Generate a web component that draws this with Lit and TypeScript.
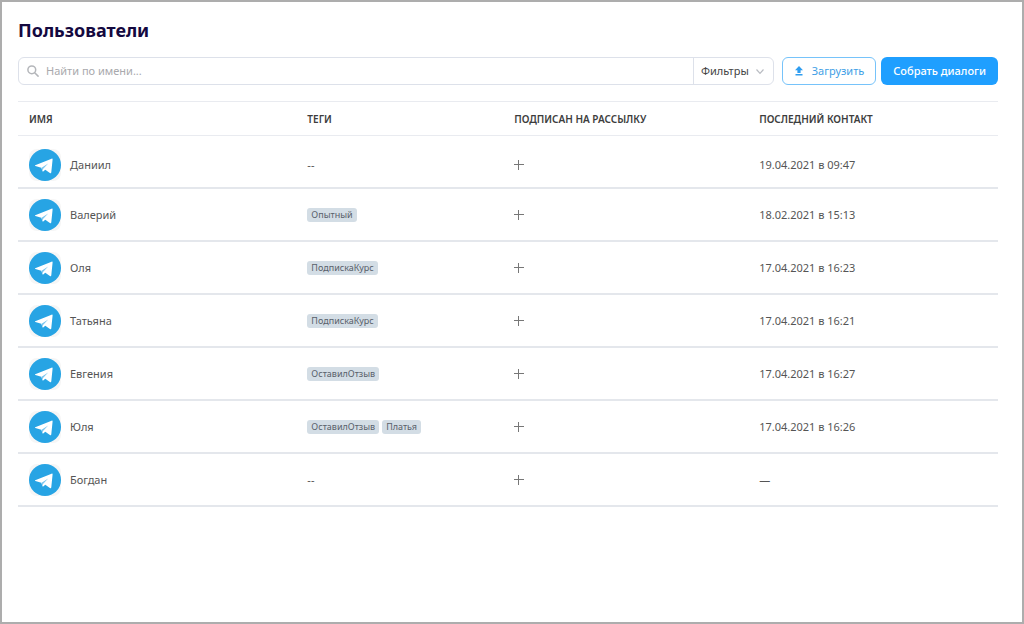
import { LitElement, html, css, svg } from "lit";
import { customElement, state } from "lit/decorators.js";

interface User {
  name: string;
  tags: string[];
  lastContact: string;
}

const USERS: User[] = [
  { name: "Даниил", tags: [], lastContact: "19.04.2021 в 09:47" },
  { name: "Валерий", tags: ["Опытный"], lastContact: "18.02.2021 в 15:13" },
  { name: "Оля", tags: ["ПодпискаКурс"], lastContact: "17.04.2021 в 16:23" },
  { name: "Татьяна", tags: ["ПодпискаКурс"], lastContact: "17.04.2021 в 16:21" },
  { name: "Евгения", tags: ["ОставилОтзыв"], lastContact: "17.04.2021 в 16:27" },
  { name: "Юля", tags: ["ОставилОтзыв", "Платья"], lastContact: "17.04.2021 в 16:26" },
  { name: "Богдан", tags: [], lastContact: "—" },
];

const plane = svg`
  <circle cx="16" cy="16" r="16" fill="#27a4e4"></circle>
  <path d="M6.200 16.300 22.600 9.700c.7-.3 1.100 0 1 .8l-1.300 12.700c-.1.900-.7 1.200-1.400.8l-4.600-3.300-1.800 1.600c-.5.400-.9.300-1.100-.3l-1.100-3.300-5.900-1.600c-.7-.2-.8-.6-.2-.8z" fill="#fff"></path>
  <path d="m12.600 18.800 6.600-4.300-5.200 5.400-.3 2.300z" fill="#7cc6ee"></path>`;

@customElement("app-root")
export class AppRoot extends LitElement {
  static styles = css`
    :host {
      display: block;
      box-sizing: border-box;
      min-height: 100vh;
      padding: 16px 24px 24px 16px;
      border: 2px solid #adadad;
      background: #fff;
      color: #555;
      font: 11px/16px "Noto Sans", "Open Sans", sans-serif;
    }
    .title {
      margin: 0;
      color: #14093f;
      font-size: 18px;
      font-weight: 700;
      line-height: 24px;
    }
    .toolbar {
      display: flex;
      gap: 5px;
      margin: 15px 0 16px;
      height: 28px;
    }
    .search {
      display: flex;
      flex: 1;
      box-sizing: border-box;
      margin-right: 3px;
      border: 1px solid #dde1ea;
      border-radius: 6px;
    }
    .field {
      display: flex;
      flex: 1;
      align-items: center;
      gap: 7px;
      padding-left: 8px;
    }
    .input {
      flex: 1;
      min-width: 0;
      padding: 0;
      border: 0;
      outline: 0;
      background: none;
      color: #444;
      font: inherit;
    }
    .input::placeholder {
      color: #a9a9ad;
      opacity: 1;
    }
    button {
      display: flex;
      align-items: center;
      justify-content: center;
      box-sizing: border-box;
      border: 0;
      background: none;
      font: inherit;
      white-space: nowrap;
      cursor: pointer;
    }
    .filters {
      gap: 6px;
      padding: 0 8px 0 7px;
      border-left: 1px solid #dde1ea;
      color: #444;
    }
    .upload {
      gap: 8px;
      padding: 0 11px;
      border: 1px solid #76c3fa;
      border-radius: 6px;
      color: #3f9fe6;
    }
    .collect {
      padding: 0 12px;
      border-radius: 6px;
      background: #1f9fff;
      color: #fff;
      font-weight: 500;
    }
    .users {
      width: 100%;
      border-collapse: separate;
      border-spacing: 0;
      table-layout: fixed;
    }
    .col-name {
      width: 28.2%;
    }
    .col-tags {
      width: 21.1%;
    }
    .col-subscribed {
      width: 25%;
    }
    th,
    td {
      box-sizing: border-box;
      padding: 0 12px 0 13px;
      text-align: left;
      vertical-align: middle;
    }
    th {
      height: 35px;
      border-top: 1px solid #e9ebf0;
      border-bottom: 1px solid #e9ebf0;
      color: #3d3d3d;
      font-size: 10px;
      font-weight: 600;
      text-transform: uppercase;
    }
    td {
      height: 53px;
      border-bottom: 2px solid #e4e7ec;
    }
    tbody tr:first-child td {
      padding-top: 6px;
    }
    th:first-child,
    td:first-child {
      padding-left: 11px;
    }
    .person {
      display: flex;
      align-items: center;
      gap: 9px;
    }
    .avatar {
      width: 32px;
      height: 32px;
      background: #f6f6f6;
      border-radius: 8px;
    }
    .tags {
      display: flex;
      gap: 3px;
    }
    .tag {
      padding: 0 4px;
      border-radius: 3px;
      background: #d3dde5;
      color: #58606a;
      font-size: 9px;
      line-height: 14px;
    }
    svg {
      display: block;
      flex: none;
    }
  `;

  @state() private query = "";

  private onInput(event: Event) {
    this.query = (event.target as HTMLInputElement).value;
  }

  render() {
    const needle = this.query.trim().toLowerCase();
    const users = USERS.filter((u) => u.name.toLowerCase().includes(needle));
    return html`
      <h1 class="title">Пользователи</h1>
      <div class="toolbar">
        <div class="search">
          <label class="field">
            <svg width="12" height="12" viewBox="0 0 12 12" fill="none" stroke="#b4b6ba" stroke-width="1.500" stroke-linecap="round">
              <circle cx="4.800" cy="4.800" r="3.900"></circle>
              <path d="m7.700 7.700 3.400 3.400"></path>
            </svg>
            <input class="input" type="text" aria-label="Найти по имени" placeholder="Найти по имени..." .value=${this.query} @input=${this.onInput} />
          </label>
          <button class="filters" type="button">
            Фильтры
            <svg width="10" height="10" viewBox="0 0 10 10" fill="none" stroke="#b9bcc2" stroke-width="1.200">
              <path d="M1.500 3.500 5 7.300l3.500-3.800"></path>
            </svg>
          </button>
        </div>
        <button class="upload" type="button">
          <svg width="10" height="10" viewBox="0 0 10 10" fill="#2f9df0">
            <path d="M5 0 9 4.200H6.600V7H3.400V4.200H1zM1.500 8h7v1.500h-7z"></path>
          </svg>
          Загрузить
        </button>
        <button class="collect" type="button">Собрать диалоги</button>
      </div>
      <table class="users">
        <colgroup>
          <col class="col-name" />
          <col class="col-tags" />
          <col class="col-subscribed" />
          <col />
        </colgroup>
        <thead>
          <tr>
            <th scope="col">Имя</th>
            <th scope="col">Теги</th>
            <th scope="col">Подписан на рассылку</th>
            <th scope="col">Последний контакт</th>
          </tr>
        </thead>
        <tbody>
          ${users.map(
            (user) => html`
              <tr>
                <td>
                  <div class="person">
                    <svg class="avatar" viewBox="0 0 32 32" aria-hidden="true">${plane}</svg>
                    ${user.name}
                  </div>
                </td>
                <td>
                  ${user.tags.length
                    ? html`<div class="tags">${user.tags.map((tag) => html`<span class="tag">${tag}</span>`)}</div>`
                    : "--"}
                </td>
                <td>
                  <svg width="10" height="10" viewBox="0 0 10 10" role="img" aria-label="Подписан" stroke="#777" stroke-width="1">
                    <path d="M0 4.500h10M4.500 0v10"></path>
                  </svg>
                </td>
                <td>${user.lastContact}</td>
              </tr>
            `,
          )}
        </tbody>
      </table>
    `;
  }
}
